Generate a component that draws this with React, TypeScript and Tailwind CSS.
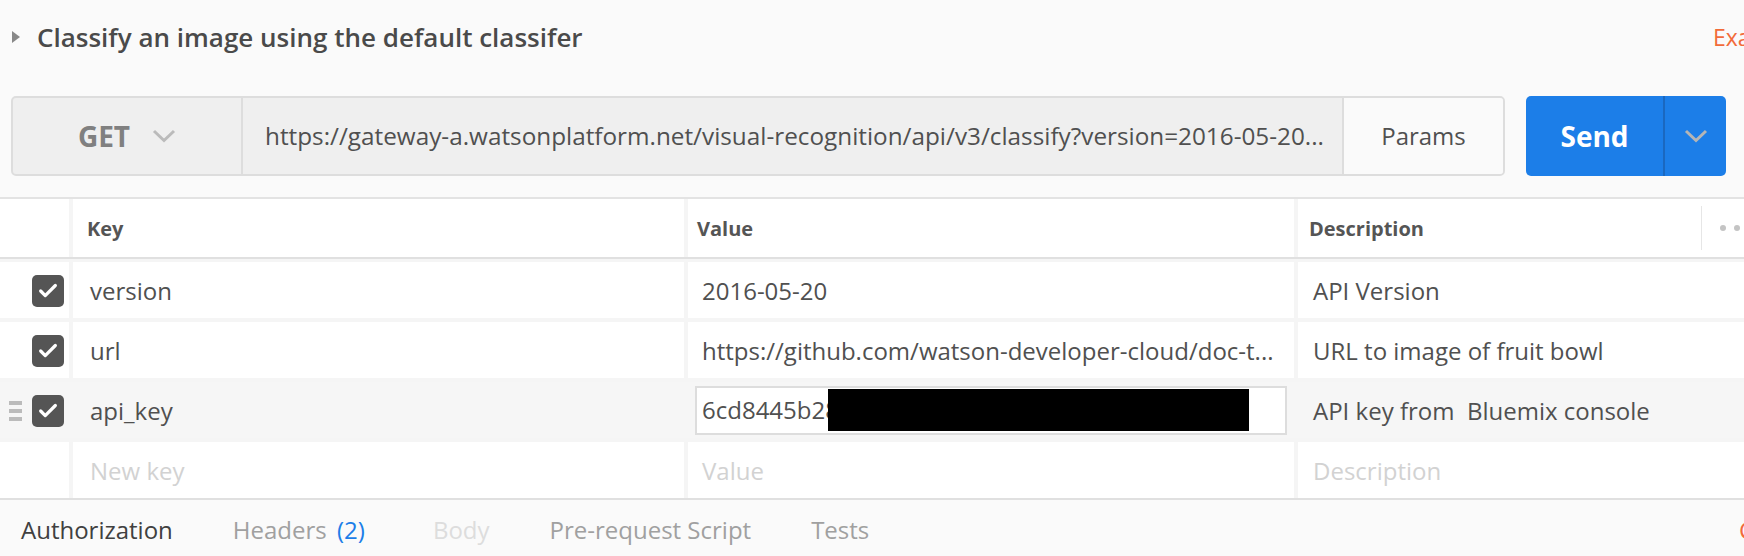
import { Check } from 'lucide-react';

type Row = {
  key: string;
  value: string;
  description: string;
  active?: boolean;
  masked?: boolean;
};

const rows: Row[] = [
  { key: 'version', value: '2016-05-20', description: 'API Version' },
  { key: 'url', value: 'https://github.com/watson-developer-cloud/doc-t...', description: 'URL to image of fruit bowl' },
  { key: 'api_key', value: '6cd8445b28', description: 'API key from  Bluemix console', active: true, masked: true },
];

function Chevron({ className }: { className?: string }) {
  return (
    <svg width="24" height="14" viewBox="0 0 24 14" className={className}>
      <polyline points="2,2 12,11.5 22,2" fill="none" stroke="currentColor" strokeWidth="3" />
    </svg>
  );
}

function Checkbox() {
  return (
    <div className="w-[32px] h-[32px] rounded-[5px] bg-[#555555] flex items-center justify-center">
      <Check size={22} strokeWidth={3.5} className="text-white" />
    </div>
  );
}

function DragHandle() {
  return (
    <div className="flex flex-col gap-[4px]">
      <div className="w-[13px] h-[4px] bg-[#bbbbbb]" />
      <div className="w-[13px] h-[4px] bg-[#bbbbbb]" />
      <div className="w-[13px] h-[4px] bg-[#bbbbbb]" />
    </div>
  );
}

export default function App() {
  return (
    <div className="w-[1744px] h-[556px] overflow-hidden bg-[#fafafa] font-['Open_Sans',sans-serif] text-[#505050]">
      {/* Request name + url bar */}
      <div className="border-b-2 border-[#e3e3e3] pb-[21px]">
        <div className="h-[74px] flex items-center">
          <div className="pl-[12px] flex items-center flex-1">
            <svg width="8" height="12" viewBox="0 0 8 12">
              <polygon points="0,0 8,6 0,12" fill="#888888" />
            </svg>
            <span className="ml-[17px] text-[26px] font-semibold text-[#4a4a4a]">Classify an image using the default classifer</span>
          </div>
          <div className="w-[31px] shrink-0 whitespace-nowrap text-[23px] text-[#f26b3a]">Examples</div>
        </div>

        <div className="mt-[22px] flex pl-[11px]">
          <div className="w-[1494px] h-[80px] flex rounded-[5px] border-2 border-[#dddddd] bg-[#efefef] overflow-hidden">
            <div className="w-[230px] flex items-center justify-center gap-[22px] border-r-2 border-[#dddddd]">
              <span className="text-[28px] font-bold text-[#808080]">GET</span>
              <Chevron className="text-[#bbbbbb]" />
            </div>
            <div className="flex-1 min-w-0 flex items-center pl-[22px] pr-[6px] border-r-2 border-[#dddddd]">
              <span className="whitespace-nowrap overflow-hidden text-[24.3px] text-[#505050]">
                https://gateway-a.watsonplatform.net/visual-recognition/api/v3/classify?version=2016-05-20...
              </span>
            </div>
            <div className="w-[159px] bg-[#fafafa] flex items-center justify-center text-[24px] text-[#505050]">Params</div>
          </div>
          <div className="ml-[21px] w-[200px] h-[80px] flex rounded-[5px] bg-[#1c7ee8] overflow-hidden">
            <div className="w-[139px] flex items-center justify-center border-r-2 border-[#1a68c0] text-[28px] font-bold text-white">
              Send
            </div>
            <div className="flex-1 flex items-center justify-center">
              <Chevron className="text-[#b5b5b5]" />
            </div>
          </div>
        </div>
      </div>

      {/* Params table */}
      <div className="bg-[#f5f5f5]">
        <div className="grid grid-cols-[69px_611px_606px_1fr] gap-x-[4px] h-[60px] border-b-2 border-[#e0e0e0] text-[20px] font-bold text-[#555555]">
          <div className="bg-white" />
          <div className="bg-white flex items-center pl-[14px] pt-[2px]">Key</div>
          <div className="bg-white flex items-center pl-[9px] pt-[2px]">Value</div>
          <div className="bg-white flex items-center">
            <span className="w-[403px] shrink-0 pl-[11px] pt-[2px]">Description</span>
            <div className="w-px h-[44px] bg-[#e6e6e6]" />
            <div className="ml-[18px] flex gap-[8px]">
              <div className="w-[6px] h-[6px] rounded-full bg-[#c4c4c4]" />
              <div className="w-[6px] h-[6px] rounded-full bg-[#c4c4c4]" />
              <div className="w-[6px] h-[6px] rounded-full bg-[#c4c4c4]" />
            </div>
          </div>
        </div>

        <div className="pt-[3px] flex flex-col gap-[4px] text-[24px]">
          {rows.map(row => (
            <div
              key={row.key}
              className={`grid grid-cols-[69px_611px_606px_1fr] gap-x-[4px] h-[56px] ${row.active ? 'bg-[#f6f6f6]' : ''}`}
            >
              <div className={`flex items-center justify-between pl-[9px] pr-[5px] pt-[2px] ${row.active ? '' : 'bg-white'}`}>
                {row.active ? <DragHandle /> : <span />}
                <Checkbox />
              </div>
              <div className={`flex items-center pl-[17px] pt-[2px] ${row.active ? '' : 'bg-white'}`}>{row.key}</div>
              <div className={`flex items-center ${row.active ? '' : 'bg-white pl-[14px] pt-[2px]'}`}>
                {row.masked ? (
                  <div className="ml-[7px] w-[592px] h-[49px] border-2 border-[#dddddd] bg-white flex items-center pl-[5px]">
                    <span className="w-[126px] shrink-0 overflow-hidden whitespace-nowrap">{row.value}</span>
                    <div className="w-[421px] h-[42px] bg-black" />
                  </div>
                ) : (
                  <span className="whitespace-nowrap">{row.value}</span>
                )}
              </div>
              <div className={`flex items-center pl-[15px] pt-[2px] whitespace-pre ${row.active ? '' : 'bg-white'}`}>{row.description}</div>
            </div>
          ))}

          <div className="grid grid-cols-[69px_611px_606px_1fr] gap-x-[4px] h-[56px] text-[#d2d2d2]">
            <div className="bg-white" />
            <div className="bg-white flex items-center pl-[17px] pt-[2px]">New key</div>
            <div className="bg-white flex items-center pl-[14px] pt-[2px]">Value</div>
            <div className="bg-white flex items-center pl-[15px] pt-[2px]">Description</div>
          </div>
        </div>
      </div>

      {/* Request tabs */}
      <div className="border-t-2 border-[#e0e0e0] h-[56px] flex items-center pt-[6px] text-[24px]">
        <div className="flex-1 flex items-center gap-[60px] pl-[21px]">
          <span className="text-[#404040]">Authorization</span>
          <span className="mr-[8px] text-[#a0a0a0]">
            Headers <span className="ml-[4px] text-[#1c7ee8]">(2)</span>
          </span>
          <span className="text-[#dddddd]">Body</span>
          <span className="text-[#a0a0a0]">Pre-request Script</span>
          <span className="text-[#a0a0a0]">Tests</span>
        </div>
        <div className="w-[5px] shrink-0 whitespace-nowrap text-[#f26b3a]">Cookies</div>
      </div>
    </div>
  );
}
